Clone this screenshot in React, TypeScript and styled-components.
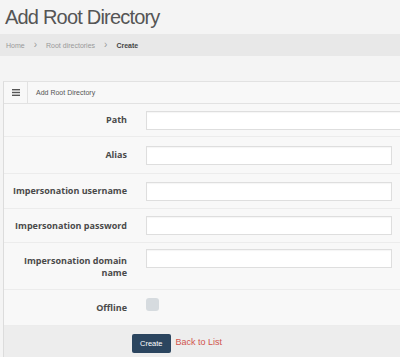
import styled, { createGlobalStyle } from "styled-components";

const GlobalStyle = createGlobalStyle`
    html, body {
        margin: 0;
        padding: 0;
        background: #f4f4f4;
        overflow: hidden;
        font-family: "Open Sans", "Liberation Sans", sans-serif;
    }
`;

const Page = styled.div`
    width: 400px;
    height: 357px;
    overflow: hidden;
`;

const Title = styled.h1`
    margin: 0;
    height: 34px;
    padding-left: 5px;
    font-family: "Liberation Sans", Arial, sans-serif;
    font-weight: normal;
    font-size: 20px;
    letter-spacing: -0.8px;
    line-height: 34px;
    color: #555;
`;

const Breadcrumb = styled.nav`
    display: flex;
    align-items: center;
    gap: 9px;
    height: 22px;
    padding-left: 6px;
    background: #e8e8e8;
    font-family: "Liberation Sans", Arial, sans-serif;
    font-size: 7px;
    color: #999;
`;

const Crumb = styled.span<{ $active?: boolean }>`
    color: ${(p) => (p.$active ? "#444" : "#999")};
    font-weight: ${(p) => (p.$active ? "bold" : "normal")};
`;

const Sep = styled.span`
    font-size: 10px;
    line-height: 10px;
    color: #999;
`;

const Panel = styled.section`
    margin: 25px 0 0 3px;
    border-left: 1px solid #dcdcdc;
    border-top: 1px solid #e2e2e2;
    background: #f8f8f8;
`;

const PanelHeader = styled.header`
    display: flex;
    align-items: center;
    height: 21px;
    border-bottom: 1px solid #e2e2e2;
    font-family: "Liberation Sans", Arial, sans-serif;
    font-size: 7px;
    color: #555;
`;

const IconCell = styled.div`
    display: flex;
    align-items: center;
    justify-content: center;
    width: 23px;
    height: 100%;
    border-right: 1px solid #e2e2e2;
    margin-right: 8px;
`;

const Row = styled.div<{ $height: number }>`
    display: grid;
    grid-template-columns: 123px auto;
    column-gap: 19px;
    align-items: center;
    height: ${(p) => p.$height}px;
    border-bottom: 1px solid #ececec;
`;

const Label = styled.label<{ $multi?: boolean }>`
    text-align: right;
    font-size: 9px;
    font-weight: 700;
    line-height: 12px;
    color: #4a4a4a;
    align-self: ${(p) => (p.$multi ? "start" : "center")};
    padding-top: ${(p) => (p.$multi ? "12px" : "0")};
`;

const Input = styled.input<{ $wide?: boolean; $top?: boolean }>`
    box-sizing: border-box;
    width: ${(p) => (p.$wide ? "270px" : "246px")};
    height: 19px;
    border: 1px solid #dedede;
    box-shadow: inset 0 1px 1px rgba(0, 0, 0, 0.04);
    background: #fff;
    align-self: ${(p) => (p.$top ? "start" : "center")};
    margin-top: ${(p) => (p.$top ? "6px" : "0")};
`;

const Check = styled.span`
    display: block;
    width: 13px;
    height: 13px;
    border-radius: 3px;
    background: #d6dbdf;
    margin-top: -6px;
`;

const Footer = styled.div`
    display: flex;
    align-items: center;
    gap: 5px;
    height: 32px;
    padding-left: 128px;
    background: #ededed;
`;

const Button = styled.button`
    height: 19px;
    padding: 0 8px;
    border: none;
    border-radius: 2px;
    background: #2b455f;
    color: #fff;
    font-family: "Liberation Sans", Arial, sans-serif;
    font-size: 7.5px;
    margin-top: 3px;
`;

const BackLink = styled.a`
    font-family: "Liberation Sans", Arial, sans-serif;
    font-size: 9px;
    color: #d0544c;
    text-decoration: none;
`;

const Hamburger = () => (
    <svg width="8" height="7" viewBox="0 0 8 7">
        <rect x="0" y="0" width="8" height="1.4" fill="#555" />
        <rect x="0" y="2.8" width="8" height="1.4" fill="#555" />
        <rect x="0" y="5.6" width="8" height="1.4" fill="#555" />
    </svg>
);

const App = () => {
    return (
        <Page>
            <GlobalStyle />
            <Title>Add Root Directory</Title>
            <Breadcrumb>
                <Crumb>Home</Crumb>
                <Sep>›</Sep>
                <Crumb>Root directories</Crumb>
                <Sep>›</Sep>
                <Crumb $active>Create</Crumb>
            </Breadcrumb>
            <Panel>
                <PanelHeader>
                    <IconCell><Hamburger /></IconCell>
                    Add Root Directory
                </PanelHeader>
                <Row $height={32}>
                    <Label>Path</Label>
                    <Input $wide />
                </Row>
                <Row $height={36}>
                    <Label>Alias</Label>
                    <Input />
                </Row>
                <Row $height={34}>
                    <Label>Impersonation username</Label>
                    <Input />
                </Row>
                <Row $height={33}>
                    <Label>Impersonation password</Label>
                    <Input />
                </Row>
                <Row $height={46}>
                    <Label $multi>Impersonation domain<br />name</Label>
                    <Input $top />
                </Row>
                <Row $height={35}>
                    <Label>Offline</Label>
                    <Check />
                </Row>
                <Footer>
                    <Button>Create</Button>
                    <BackLink href="#">Back to List</BackLink>
                </Footer>
            </Panel>
        </Page>
    );
};

export default App;
